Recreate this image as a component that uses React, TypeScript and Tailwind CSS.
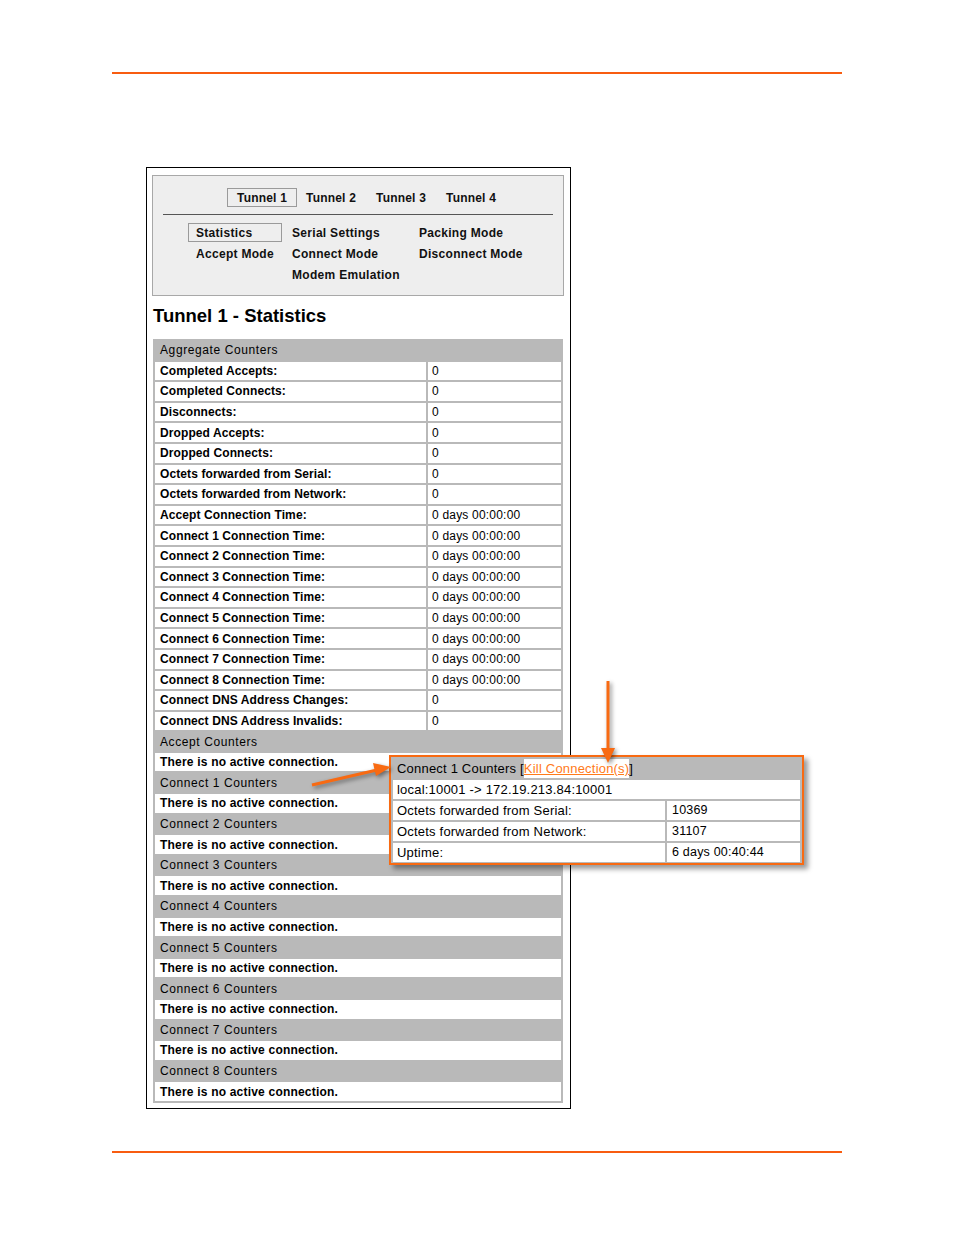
const ORANGE = "bg-[#f85c10]";

type Row = { kind: "head"; text: string } | { kind: "msg"; text: string } | { kind: "kv"; label: string; value: string };

const time = "0 days 00:00:00";

const rows: Row[] = [
  { kind: "head", text: "Aggregate Counters" },
  { kind: "kv", label: "Completed Accepts:", value: "0" },
  { kind: "kv", label: "Completed Connects:", value: "0" },
  { kind: "kv", label: "Disconnects:", value: "0" },
  { kind: "kv", label: "Dropped Accepts:", value: "0" },
  { kind: "kv", label: "Dropped Connects:", value: "0" },
  { kind: "kv", label: "Octets forwarded from Serial:", value: "0" },
  { kind: "kv", label: "Octets forwarded from Network:", value: "0" },
  { kind: "kv", label: "Accept Connection Time:", value: time },
  ...[1, 2, 3, 4, 5, 6, 7, 8].map((n) => ({ kind: "kv" as const, label: `Connect ${n} Connection Time:`, value: time })),
  { kind: "kv", label: "Connect DNS Address Changes:", value: "0" },
  { kind: "kv", label: "Connect DNS Address Invalids:", value: "0" },
  { kind: "head", text: "Accept Counters" },
  { kind: "msg", text: "There is no active connection." },
  ...[1, 2, 3, 4, 5, 6, 7, 8].flatMap((n) => [
    { kind: "head" as const, text: `Connect ${n} Counters` },
    { kind: "msg" as const, text: "There is no active connection." },
  ]),
];

function StatRow({ row }: { row: Row }) {
  if (row.kind === "head") {
    return (
      <div className="flex h-[18.6px] items-center pl-[5px] tracking-[0.6px] text-black">{row.text}</div>
    );
  }
  if (row.kind === "msg") {
    return (
      <div className="flex h-[18.6px] items-center bg-white pl-[5px] font-bold tracking-[0.2px]">{row.text}</div>
    );
  }
  return (
    <div className="flex h-[18.6px] gap-[2px]">
      <div className="flex w-[271px] items-center bg-white pl-[5px] font-bold tracking-[0.1px]">{row.label}</div>
      <div className="flex flex-1 items-center bg-white pl-[4px] tracking-[0.2px]">{row.value}</div>
    </div>
  );
}

function Popup() {
  const items = [
    ["Octets forwarded from Serial:", "10369"],
    ["Octets forwarded from Network:", "31107"],
    ["Uptime:", "6 days 00:40:44"],
  ];
  return (
    <div className="absolute left-[389px] top-[755px] w-[415px] border-2 border-[#f86a12] bg-[#b9b9b9] px-[2px] pb-[1px] text-[13px] tracking-[0.2px] text-black shadow-[4px_4px_5px_rgba(0,0,0,0.4)]">
      <div className="flex h-[23px] items-center pl-[4px]">
        Connect 1 Counters [
        <span className="bg-white text-[#ff7a1a] underline">Kill Connection(s)</span>]
      </div>
      <div className="flex flex-col gap-[2px]">
        <div className="flex h-[19px] items-center bg-white pl-[4px]">local:10001 -&gt; 172.19.213.84:10001</div>
        {items.map(([l, v]) => (
          <div key={l} className="flex h-[19px] gap-[2px]">
            <div className="flex w-[272px] items-center bg-white pl-[4px]">{l}</div>
            <div className="flex flex-1 items-center bg-white pl-[5px] text-[12.5px]">{v}</div>
          </div>
        ))}
      </div>
    </div>
  );
}

function Arrows() {
  return (
    <svg
      className="pointer-events-none absolute left-0 top-0 drop-shadow-[2px_2px_2px_rgba(0,0,0,0.45)]"
      width="954"
      height="1235"
    >
      <line x1="608" y1="681" x2="608" y2="750" stroke="#f86a12" strokeWidth="3" />
      <polygon points="601,748 615,748 608,763" fill="#f86a12" />
      <line x1="312" y1="785" x2="377" y2="770" stroke="#f86a12" strokeWidth="3" />
      <polygon points="373,763 376,776 391,767" fill="#f86a12" />
    </svg>
  );
}

export default function App() {
  const tabs = ["Tunnel 1", "Tunnel 2", "Tunnel 3", "Tunnel 4"];
  return (
    <div className="relative h-[1235px] w-[954px] overflow-hidden bg-white font-['Liberation_Sans',Arial,sans-serif] text-[12px] text-black">
      <div className={`ml-[112px] mt-[72px] h-[2px] w-[730px] ${ORANGE}`} />

      <div className="ml-[146px] mt-[93px] h-[942px] w-[425px] border border-black pl-[5px] pt-[7px]">
        <div className="h-[121px] w-[412px] border border-[#a8a8a8] bg-[#eeeeee] pt-[12px] text-[#111]">
          <div className="flex pl-[74px]">
            {tabs.map((t, i) => (
              <div
                key={t}
                className={`flex h-[19px] w-[70px] items-center pl-[9px] font-bold tracking-[0.2px] ${
                  i === 0 ? "w-[69px] border border-[#9a9a9a]" : ""
                }`}
              >
                {t}
              </div>
            ))}
          </div>
          <div className="mx-[10px] mt-[7px] h-px bg-[#555]" />
          <div className="ml-[35px] mt-[8px] grid grid-cols-[104px_127px_1fr] font-bold tracking-[0.3px]">
            <div className="flex h-[19px] w-[94px] items-center border border-[#9a9a9a] pl-[7px]">Statistics</div>
            <div className="flex h-[19px] items-center">Serial Settings</div>
            <div className="flex h-[19px] items-center">Packing Mode</div>
            <div className="mt-[2px] flex h-[19px] items-center pl-[8px]">Accept Mode</div>
            <div className="mt-[2px] flex h-[19px] items-center">Connect Mode</div>
            <div className="mt-[2px] flex h-[19px] items-center">Disconnect Mode</div>
            <div />
            <div className="mt-[2px] flex h-[19px] items-center">Modem Emulation</div>
          </div>
        </div>

        <h1 className="ml-[1px] mt-[9px] h-[22px] text-[18.5px] font-bold leading-[22px]">Tunnel 1 - Statistics</h1>

        <div className="ml-[1px] mt-[12px] flex w-[410px] flex-col gap-[2px] bg-[#b9b9b9] p-[2px]">
          {rows.map((r, i) => (
            <StatRow key={i} row={r} />
          ))}
        </div>
      </div>

      <div className={`ml-[112px] mt-[42px] h-[2px] w-[730px] ${ORANGE}`} />

      <Popup />
      <Arrows />
    </div>
  );
}
